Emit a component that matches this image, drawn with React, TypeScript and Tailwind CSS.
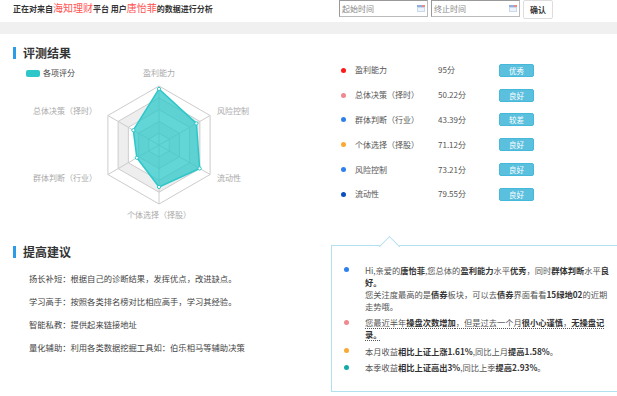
const FONT = "font-['Noto_Sans_CJK_SC','Noto_Sans',sans-serif]";

const scores = [
  { name: '盈利能力', score: '95分', level: '优秀', dot: 'bg-[#ff1a1a]' },
  { name: '总体决策（择时）', score: '50.22分', level: '良好', dot: 'bg-[#ee8a8f]' },
  { name: '群体判断（行业）', score: '43.39分', level: '较差', dot: 'bg-[#2f80ed]' },
  { name: '个体选择（择股）', score: '71.12分', level: '良好', dot: 'bg-[#fba935]' },
  { name: '风险控制', score: '73.21分', level: '良好', dot: 'bg-[#2f80ed]' },
  { name: '流动性', score: '79.55分', level: '良好', dot: 'bg-[#0c4fc0]' },
];

const tips = [
  '扬长补短：根据自己的诊断结果，发挥优点，改进缺点。',
  '学习高手：按照各类排名榜对比相应高手，学习其经验。',
  '智能私教：提供起来链接地址',
  '量化辅助：利用各类数据挖掘工具如：伯乐相马等辅助决策',
];

// radar in svg coords (svg sits at page y=60)
const CX = 159;
const CY = 86;
const R = 59;
// order: top, upper-left, lower-left, bottom, lower-right, upper-right
const values = [95, 50.22, 43.39, 71.12, 79.55, 73.21];

function pt(i: number, k: number) {
  const a = ((90 + i * 60) * Math.PI) / 180;
  return [CX + R * k * Math.cos(a), CY - R * k * Math.sin(a)];
}

function ring(k: number) {
  return [0, 1, 2, 3, 4, 5].map((i) => pt(i, k).join(',')).join(' ');
}

function Radar() {
  const data = values.map((v, i) => pt(i, v / 100));
  const label = 'fill-[#aaaaaa] text-[8px]';
  return (
    <svg width="331" height="165" className="shrink-0">
      <rect x="26" y="11" width="14" height="7" rx="2" fill="#2ec7c9" />
      <text x="43" y="17" className="fill-[#444] text-[8px]">各项评分</text>

      {[1, 0.8, 0.6, 0.4, 0.2].map((k, j) => (
        <polygon
          key={k}
          points={ring(k)}
          fill={j % 2 === 0 ? '#ffffff' : '#eeeeee'}
          stroke="#cccccc"
          strokeWidth="1"
        />
      ))}
      {[0, 1, 2, 3, 4, 5].map((i) => {
        const [x, y] = pt(i, 1);
        return <line key={i} x1={CX} y1={CY} x2={x} y2={y} stroke="#cccccc" strokeWidth="1" />;
      })}

      <polygon
        points={data.map((p) => p.join(',')).join(' ')}
        fill="#2ec7c9"
        fillOpacity="0.75"
        stroke="#2ec7c9"
        strokeWidth="1.5"
        strokeLinejoin="round"
      />
      {data.map(([x, y], i) => (
        <circle key={i} cx={x} cy={y} r="1.6" fill="#ffffff" stroke="#2ec7c9" strokeWidth="1" />
      ))}

      <text x={CX} y="17" textAnchor="middle" className={label}>盈利能力</text>
      <text x="217" y="55" className={label}>风险控制</text>
      <text x="217" y="122" className={label}>流动性</text>
      <text x={CX} y="159" textAnchor="middle" className={label}>个体选择（择股）</text>
      <text x="97" y="55" textAnchor="end" className={label}>总体决策（择时）</text>
      <text x="97" y="122" textAnchor="end" className={label}>群体判断（行业）</text>
    </svg>
  );
}

function CalendarIcon() {
  return (
    <svg width="8" height="7" viewBox="0 0 8 7">
      <rect x="0" y="0" width="8" height="7" fill="#c8d8ee" />
      <rect x="0" y="0" width="8" height="2" fill="#8fb0dc" />
      <rect x="5" y="0" width="3" height="2" fill="#e98a8a" />
      <rect x="1" y="3" width="6" height="3" fill="#eef3fa" />
    </svg>
  );
}

function DateInput({ placeholder }: { placeholder: string }) {
  return (
    <div className="flex h-[17px] w-[89px] items-center justify-between border border-[#bbb] border-t-[#999] border-l-[#999] bg-white pl-[2px] pr-[2px]">
      <span className="text-[8px] text-[#888]">{placeholder}</span>
      <CalendarIcon />
    </div>
  );
}

function SectionTitle({ children }: { children: React.ReactNode }) {
  return (
    <div className="flex h-[12px] items-center pl-[13px]">
      <span className="h-[12px] w-[3px] bg-[#2f9be6]" />
      <h2 className="ml-[7px] text-[12px] font-bold leading-[12px] text-[#333]">{children}</h2>
    </div>
  );
}

const B = 'font-bold text-[#333]';

export default function App() {
  return (
    <div className={`relative h-[396px] w-[617px] overflow-hidden bg-white ${FONT}`}>
      {/* top bar */}
      <div className="flex h-[22px] items-start">
        <p className="pl-[13px] pt-[1px] text-[8px] font-bold leading-[14px] text-[#333]">
          正在对来自<span className="text-[10px] font-normal text-[#ff5252]">海知理财</span>平台 用户
          <span className="text-[10px] font-normal text-[#ff5252]">唐怡菲</span>的数据进行分析
        </p>
        <div className="ml-auto mr-[64px] flex items-start">
          <DateInput placeholder="起始时间" />
          <div className="w-[3px]" />
          <DateInput placeholder="终止时间" />
          <button className="ml-[3px] h-[19px] w-[30px] rounded-[2px] border border-[#ddd] bg-white text-[8px] font-bold text-[#333]">
            确认
          </button>
        </div>
      </div>
      <div className="h-[12px] bg-[#f0f0f0]" />

      {/* 评测结果 */}
      <div className="pt-[13px]">
        <SectionTitle>评测结果</SectionTitle>
        <div className="flex">
          <Radar />
          <div className="-mt-[1px] shrink-0 pl-[9.5px]">
            {scores.map((s) => (
              <div key={s.name} className="flex h-[24.8px] items-center text-[8px] text-[#555]">
                <span className={`h-[5px] w-[5px] rounded-full ${s.dot}`} />
                <span className="ml-[9.5px] w-[83px]">{s.name}</span>
                <span className="w-[61px]">{s.score}</span>
                <span className="flex h-[13px] w-[35px] items-center justify-center rounded-[2px] border border-[#46b8da] bg-[#5bc0de] text-[7.5px] text-white">
                  {s.level}
                </span>
              </div>
            ))}
          </div>
        </div>
      </div>

      {/* 提高建议 */}
      <div className="flex">
        <div className="w-[331px] shrink-0 pt-[22px]">
          <SectionTitle>提高建议</SectionTitle>
          <ul className="mt-[8.5px] pl-[29px] text-[8.3px] text-[#444]">
            {tips.map((t) => (
              <li key={t} className="h-[23px] leading-[23px]">{t}</li>
            ))}
          </ul>
        </div>

        <div className="relative mt-[21px] h-[147px] w-[300px] shrink-0 border border-[#b3e0ee] bg-white pt-[17.8px]">
          <span className="absolute -top-[7px] left-[50px] h-[15px] w-[15px] rotate-45 border-l border-t border-[#b3e0ee] bg-white" />
          <ul className="relative text-[8.25px] leading-[12px] text-[#555]">
            <li className="mb-[4.3px] flex">
              <span className="ml-[11.5px] mr-[16.5px] mt-[3.5px] h-[5px] w-[5px] shrink-0 rounded-full bg-[#2f80ed]" />
              <p className="w-[245px]">
                Hi,亲爱的<b className={B}>唐怡菲</b>,您总体的<b className={B}>盈利能力</b>水平<b className={B}>优秀</b>，同时<b className={B}>群体判断</b>水平<b className={B}>良好。</b>
                <br />
                您关注度最高的是<b className={B}>债券</b>板块，可以去<b className={B}>债券</b>界面看看<b className={B}>15绿地02</b>的近期走势哦。
              </p>
            </li>
            <li className="mb-[4.7px] flex">
              <span className="ml-[11.5px] mr-[16.5px] mt-[3.5px] h-[5px] w-[5px] shrink-0 rounded-full bg-[#ee8a8f]" />
              <p className="w-[245px] underline decoration-dotted underline-offset-2">
                您最近半年<b className={B}>操盘次数增加</b>，但是过去一个月<b className={B}>很小心谨慎</b>，<b className={B}>无操盘记录。</b>
              </p>
            </li>
            <li className="mb-[4.3px] flex">
              <span className="ml-[11.5px] mr-[16.5px] mt-[3.5px] h-[5px] w-[5px] shrink-0 rounded-full bg-[#fba935]" />
              <p className="w-[245px]">
                本月收益<b className={B}>相比上证上涨1.61%</b>,同比上月<b className={B}>提高1.58%</b>。
              </p>
            </li>
            <li className="flex">
              <span className="ml-[11.5px] mr-[16.5px] mt-[3.5px] h-[5px] w-[5px] shrink-0 rounded-full bg-[#14a9a9]" />
              <p className="w-[245px]">
                本季收益<b className={B}>相比上证高出3%</b>,同比上季<b className={B}>提高2.93%</b>。
              </p>
            </li>
          </ul>
        </div>
      </div>
    </div>
  );
}
